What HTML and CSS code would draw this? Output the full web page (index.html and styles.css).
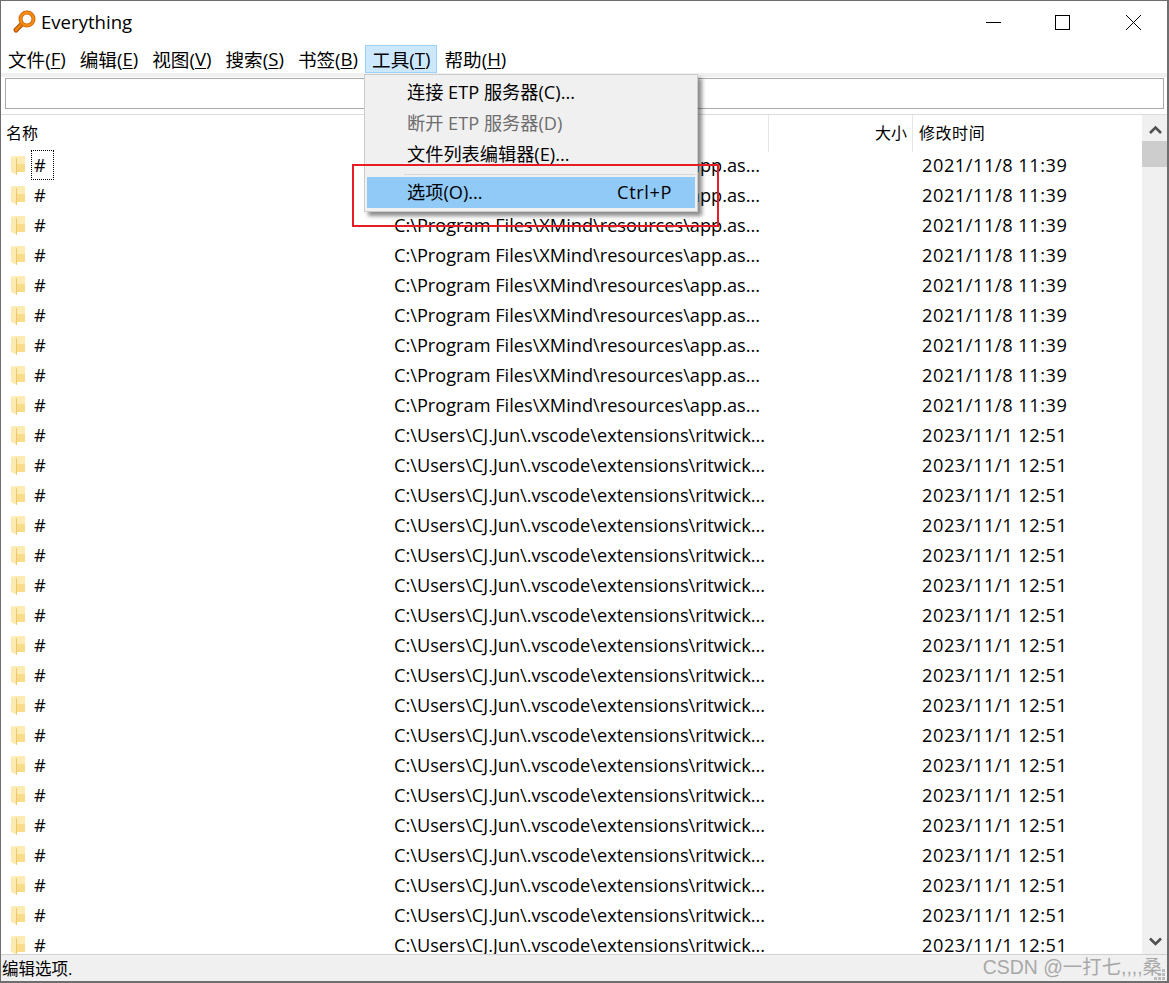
FILE: index.html
```html
<!DOCTYPE html>
<html lang="zh-CN">
<head>
    <meta charset="UTF-8">
    <title>Everything</title>
    <link rel="stylesheet" href="styles.css">
</head>
<body>
    <div class="window">
        <div class="titlebar">
            <svg class="app-icon" width="24" height="24" viewBox="0 0 24 24">
                <path d="M11 13 L4 20" stroke="#a84e00" stroke-width="5" stroke-linecap="round"/>
                <path d="M11 13 L4 20" stroke="#f08010" stroke-width="3" stroke-linecap="round"/>
                <circle cx="15" cy="9" r="6.5" fill="#fff" stroke="#c86000" stroke-width="4"/>
                <circle cx="15" cy="9" r="6.5" fill="none" stroke="#f58a14" stroke-width="2.4"/>
            </svg>
            <span class="title">Everything</span>
            <div class="controls">
                <svg width="69" height="30" viewBox="0 0 69 30"><path d="M0 14.5 H15" stroke="#000"/></svg>
                <svg width="71" height="30" viewBox="0 0 71 30"><rect x="0.5" y="7.5" width="14" height="14" fill="none" stroke="#000"/></svg>
                <svg width="15" height="30" viewBox="0 0 15 30"><path d="M0 7 L15 22 M15 7 L0 22" stroke="#000"/></svg>
            </div>
        </div>
        <div class="menubar">
            <span class="menu-item">文件(<u>F</u>)</span>
            <span class="menu-item">编辑(<u>E</u>)</span>
            <span class="menu-item">视图(<u>V</u>)</span>
            <span class="menu-item">搜索(<u>S</u>)</span>
            <span class="menu-item">书签(<u>B</u>)</span>
            <span class="menu-item active">工具(<u>T</u>)</span>
            <span class="menu-item">帮助(<u>H</u>)</span>
        </div>
        <div class="searchbar"><input class="search" type="text"></div>
        <div class="content">
            <div class="list">
                <div class="row head">
                    <div class="col name">名称</div>
                    <div class="col path"></div>
                    <div class="col size">大小</div>
                    <div class="col time">修改时间</div>
                </div>
                <div class="rows" id="rows">
                    <div class="row"><div class="col name"><svg class="folder"><use href="#folder"/></svg><span class="focus">#</span></div><div class="col path">C:\Program Files\XMind\resources\app.as...</div><div class="col size"></div><div class="col time">2021/11/8 11:39</div></div>
                    <div class="row"><div class="col name"><svg class="folder"><use href="#folder"/></svg><span class="hash">#</span></div><div class="col path">C:\Program Files\XMind\resources\app.as...</div><div class="col size"></div><div class="col time">2021/11/8 11:39</div></div>
                    <div class="row"><div class="col name"><svg class="folder"><use href="#folder"/></svg><span class="hash">#</span></div><div class="col path">C:\Program Files\XMind\resources\app.as...</div><div class="col size"></div><div class="col time">2021/11/8 11:39</div></div>
                    <div class="row"><div class="col name"><svg class="folder"><use href="#folder"/></svg><span class="hash">#</span></div><div class="col path">C:\Program Files\XMind\resources\app.as...</div><div class="col size"></div><div class="col time">2021/11/8 11:39</div></div>
                    <div class="row"><div class="col name"><svg class="folder"><use href="#folder"/></svg><span class="hash">#</span></div><div class="col path">C:\Program Files\XMind\resources\app.as...</div><div class="col size"></div><div class="col time">2021/11/8 11:39</div></div>
                    <div class="row"><div class="col name"><svg class="folder"><use href="#folder"/></svg><span class="hash">#</span></div><div class="col path">C:\Program Files\XMind\resources\app.as...</div><div class="col size"></div><div class="col time">2021/11/8 11:39</div></div>
                    <div class="row"><div class="col name"><svg class="folder"><use href="#folder"/></svg><span class="hash">#</span></div><div class="col path">C:\Program Files\XMind\resources\app.as...</div><div class="col size"></div><div class="col time">2021/11/8 11:39</div></div>
                    <div class="row"><div class="col name"><svg class="folder"><use href="#folder"/></svg><span class="hash">#</span></div><div class="col path">C:\Program Files\XMind\resources\app.as...</div><div class="col size"></div><div class="col time">2021/11/8 11:39</div></div>
                    <div class="row"><div class="col name"><svg class="folder"><use href="#folder"/></svg><span class="hash">#</span></div><div class="col path">C:\Program Files\XMind\resources\app.as...</div><div class="col size"></div><div class="col time">2021/11/8 11:39</div></div>
                    <div class="row"><div class="col name"><svg class="folder"><use href="#folder"/></svg><span class="hash">#</span></div><div class="col path">C:\Users\CJ.Jun\.vscode\extensions\ritwick...</div><div class="col size"></div><div class="col time">2023/11/1 12:51</div></div>
                    <div class="row"><div class="col name"><svg class="folder"><use href="#folder"/></svg><span class="hash">#</span></div><div class="col path">C:\Users\CJ.Jun\.vscode\extensions\ritwick...</div><div class="col size"></div><div class="col time">2023/11/1 12:51</div></div>
                    <div class="row"><div class="col name"><svg class="folder"><use href="#folder"/></svg><span class="hash">#</span></div><div class="col path">C:\Users\CJ.Jun\.vscode\extensions\ritwick...</div><div class="col size"></div><div class="col time">2023/11/1 12:51</div></div>
                    <div class="row"><div class="col name"><svg class="folder"><use href="#folder"/></svg><span class="hash">#</span></div><div class="col path">C:\Users\CJ.Jun\.vscode\extensions\ritwick...</div><div class="col size"></div><div class="col time">2023/11/1 12:51</div></div>
                    <div class="row"><div class="col name"><svg class="folder"><use href="#folder"/></svg><span class="hash">#</span></div><div class="col path">C:\Users\CJ.Jun\.vscode\extensions\ritwick...</div><div class="col size"></div><div class="col time">2023/11/1 12:51</div></div>
                    <div class="row"><div class="col name"><svg class="folder"><use href="#folder"/></svg><span class="hash">#</span></div><div class="col path">C:\Users\CJ.Jun\.vscode\extensions\ritwick...</div><div class="col size"></div><div class="col time">2023/11/1 12:51</div></div>
                    <div class="row"><div class="col name"><svg class="folder"><use href="#folder"/></svg><span class="hash">#</span></div><div class="col path">C:\Users\CJ.Jun\.vscode\extensions\ritwick...</div><div class="col size"></div><div class="col time">2023/11/1 12:51</div></div>
                    <div class="row"><div class="col name"><svg class="folder"><use href="#folder"/></svg><span class="hash">#</span></div><div class="col path">C:\Users\CJ.Jun\.vscode\extensions\ritwick...</div><div class="col size"></div><div class="col time">2023/11/1 12:51</div></div>
                    <div class="row"><div class="col name"><svg class="folder"><use href="#folder"/></svg><span class="hash">#</span></div><div class="col path">C:\Users\CJ.Jun\.vscode\extensions\ritwick...</div><div class="col size"></div><div class="col time">2023/11/1 12:51</div></div>
                    <div class="row"><div class="col name"><svg class="folder"><use href="#folder"/></svg><span class="hash">#</span></div><div class="col path">C:\Users\CJ.Jun\.vscode\extensions\ritwick...</div><div class="col size"></div><div class="col time">2023/11/1 12:51</div></div>
                    <div class="row"><div class="col name"><svg class="folder"><use href="#folder"/></svg><span class="hash">#</span></div><div class="col path">C:\Users\CJ.Jun\.vscode\extensions\ritwick...</div><div class="col size"></div><div class="col time">2023/11/1 12:51</div></div>
                    <div class="row"><div class="col name"><svg class="folder"><use href="#folder"/></svg><span class="hash">#</span></div><div class="col path">C:\Users\CJ.Jun\.vscode\extensions\ritwick...</div><div class="col size"></div><div class="col time">2023/11/1 12:51</div></div>
                    <div class="row"><div class="col name"><svg class="folder"><use href="#folder"/></svg><span class="hash">#</span></div><div class="col path">C:\Users\CJ.Jun\.vscode\extensions\ritwick...</div><div class="col size"></div><div class="col time">2023/11/1 12:51</div></div>
                    <div class="row"><div class="col name"><svg class="folder"><use href="#folder"/></svg><span class="hash">#</span></div><div class="col path">C:\Users\CJ.Jun\.vscode\extensions\ritwick...</div><div class="col size"></div><div class="col time">2023/11/1 12:51</div></div>
                    <div class="row"><div class="col name"><svg class="folder"><use href="#folder"/></svg><span class="hash">#</span></div><div class="col path">C:\Users\CJ.Jun\.vscode\extensions\ritwick...</div><div class="col size"></div><div class="col time">2023/11/1 12:51</div></div>
                    <div class="row"><div class="col name"><svg class="folder"><use href="#folder"/></svg><span class="hash">#</span></div><div class="col path">C:\Users\CJ.Jun\.vscode\extensions\ritwick...</div><div class="col size"></div><div class="col time">2023/11/1 12:51</div></div>
                    <div class="row"><div class="col name"><svg class="folder"><use href="#folder"/></svg><span class="hash">#</span></div><div class="col path">C:\Users\CJ.Jun\.vscode\extensions\ritwick...</div><div class="col size"></div><div class="col time">2023/11/1 12:51</div></div>
                    <div class="row"><div class="col name"><svg class="folder"><use href="#folder"/></svg><span class="hash">#</span></div><div class="col path">C:\Users\CJ.Jun\.vscode\extensions\ritwick...</div><div class="col size"></div><div class="col time">2023/11/1 12:51</div></div>
                </div>
            </div>
            <div class="scrollbar">
                <svg class="arrow" width="25" height="26" viewBox="0 0 25 26"><path d="M8 18 L13.5 12.5 L19 18" fill="none" stroke="#505050" stroke-width="2.6"/></svg>
                <div class="thumb"></div>
                <div class="track"></div>
                <svg class="arrow" width="25" height="26" viewBox="0 0 25 26"><path d="M8 10.5 L13.5 16 L19 10.5" fill="none" stroke="#505050" stroke-width="2.6"/></svg>
            </div>
        </div>
        <div class="statusbar">
            <span>编辑选项.</span>
            <svg class="grip" width="12" height="12" viewBox="0 0 12 12">
                <path d="M8 0h3v3H8z M4 4h3v3H4z M8 4h3v3H8z M0 8h3v3H0z M4 8h3v3H4z M8 8h3v3H8z" fill="#bdbdbd"/>
            </svg>
        </div>

        <div class="popup">
            <div class="popup-item">连接 ETP 服务器(C)...</div>
            <div class="popup-item disabled">断开 ETP 服务器(D)</div>
            <div class="popup-item">文件列表编辑器(E)...</div>
            <div class="popup-sep"></div>
            <div class="popup-item selected"><span>选项(O)...</span><span class="shortcut">Ctrl+P</span></div>
        </div>
        <div class="redbox"></div>
        <div class="watermark">CSDN @一打七,,,,桑</div>
    </div>

    <svg class="defs" width="0" height="0">
        <symbol id="folder" viewBox="0 0 15 21">
            <path d="M3 1 H14 V17 H3 Z" fill="#f9dc8a"/>
            <path d="M3 1 H14 V9 H3 Z" fill="#fcebb2"/>
            <path d="M0 1 L6 3 V20 L0 17 Z" fill="#fdeab0"/>
            <path d="M6 3 V20 L5 19.5 V3.5 Z" fill="#ecc96f"/>
        </symbol>
    </svg>
</body>
</html>
```

FILE: styles.css
```css
* {
    margin: 0;
    padding: 0;
    box-sizing: border-box;
}

body {
    font-family: 'Open Sans', 'Noto Sans CJK SC', sans-serif;
    font-size: 18.2px;
    color: #000000;
    background-color: #ffffff;
    overflow: hidden;
}

u {
    text-underline-offset: 2px;
}

.window {
    position: relative;
    display: flex;
    flex-direction: column;
    height: 983px;
    overflow: hidden;
    border: solid #6e6e6e;
    border-width: 1px 2px 2px 1px;
}

.titlebar {
    display: flex;
    align-items: center;
    height: 44px;
    padding: 0 26px 0 11px;
}

.app-icon {
    margin-right: 5px;
    margin-top: -2px;
}

.title {
    font-size: 18.6px;
    margin-top: -3px;
}

.controls {
    display: flex;
    align-items: center;
    margin-left: auto;
}

.menubar {
    display: flex;
    height: 28px;
    font-size: 18.6px;
    background-color: #ffffff;
}

.menu-item {
    display: flex;
    align-items: center;
    padding: 0 7px 2px;
    white-space: nowrap;
}

.menu-item.active {
    padding: 0 6px 2px;
    background-color: #cce8ff;
    border: 1px solid #99d1ff;
}

.searchbar {
    height: 42px;
    padding: 4px 3px 5px 4px;
    background-color: #ffffff;
    border-top: 1px solid #f0f0f0;
    border-bottom: 1px solid #dcdcdc;
    box-shadow: inset 0 3px 0 #f0f0f0;
}

.search {
    display: block;
    width: 100%;
    height: 31px;
    border: 1px solid #aaaaaa;
    background-color: #ffffff;
    outline: none;
}

.content {
    display: flex;
    flex: 1;
    min-height: 0;
}

.list {
    flex: 1;
    min-width: 0;
    overflow: hidden;
}

.row {
    display: grid;
    grid-template-columns: 388px 380px 144px 1fr;
    height: 30px;
    line-height: 30px;
    white-space: nowrap;
}

.head {
    height: 35px;
    line-height: 37px;
    font-size: 16px;
}

.head .col {
    padding-left: 6px;
    border-right: 1px solid #e5e5e5;
}

.head .name {
    padding-left: 5px;
}

.head .size {
    padding-right: 5px;
    text-align: right;
}

.head .time {
    border-right: none;
}

.name {
    display: flex;
    align-items: center;
}

.folder {
    width: 15px;
    height: 21px;
    margin: 0 5px 0 10px;
    flex-shrink: 0;
}

.hash,
.focus {
    display: block;
    width: 23px;
    height: 30px;
    padding-left: 3px;
}

.focus {
    line-height: 28px;
    border: 1px dotted #000000;
    padding-left: 2px;
}

.path {
    padding-left: 5px;
    overflow: hidden;
}

.time {
    padding-left: 9px;
    letter-spacing: 0.55px;
}

.scrollbar {
    display: flex;
    flex-direction: column;
    flex-shrink: 0;
    width: 25px;
    background-color: #f0f0f0;
}

.arrow {
    flex-shrink: 0;
}

.thumb {
    height: 26px;
    background-color: #cdcdcd;
}

.track {
    flex: 1;
}

.statusbar {
    position: relative;
    display: flex;
    align-items: center;
    flex-shrink: 0;
    height: 27px;
    padding-left: 1px;
    font-size: 16.5px;
    background-color: #f0f0f0;
    border-top: 1px solid #d0d0d0;
}

.grip {
    position: absolute;
    right: 1px;
    bottom: 0;
}

.popup {
    position: absolute;
    left: 363px;
    top: 73px;
    width: 334px;
    height: 138px;
    padding: 2px;
    background-color: #f0f0f0;
    border: 1px solid #cccccc;
    box-shadow: 4px 4px 4px rgba(0, 0, 0, 0.45);
}

.popup-item {
    display: flex;
    justify-content: space-between;
    height: 31px;
    line-height: 30px;
    padding: 0 23px 0 40px;
    white-space: nowrap;
}

.popup-item.disabled {
    color: #6d6d6d;
}

.popup-item.selected {
    background-color: #91c9f7;
}

.shortcut {
    letter-spacing: 0.6px;
}

.popup-sep {
    height: 1px;
    margin: 4px 0 2px 37px;
    background-color: #d7d7d7;
}

.redbox {
    position: absolute;
    left: 351px;
    top: 163px;
    width: 367px;
    height: 63px;
    border: 2px solid #e81c24;
}

.watermark {
    position: absolute;
    right: 5px;
    bottom: 1px;
    font-family: 'Liberation Sans', 'Noto Sans CJK SC', sans-serif;
    font-size: 19.4px;
    color: #a8a8a8;
    white-space: nowrap;
}

.defs {
    position: absolute;
}
```
